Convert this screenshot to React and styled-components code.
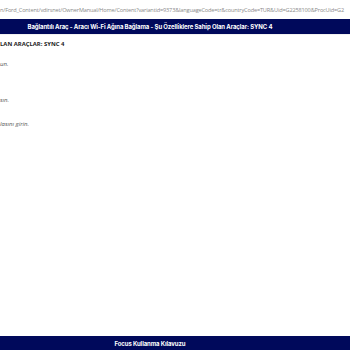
import React from "react";
import styled, { createGlobalStyle } from "styled-components";

const GlobalStyle = createGlobalStyle`
  html, body {
    margin: 0;
    padding: 0;
    background: #ffffff;
    overflow: hidden;
  }
  body {
    font-family: "Open Sans", "Liberation Sans", sans-serif;
  }
`;

const Page = styled.div`
  width: 350px;
  height: 350px;
  display: flex;
  flex-direction: column;
  overflow: hidden;
`;

const UrlLine = styled.div`
  height: 19px;
  display: flex;
  align-items: center;
  font-size: 5.6px;
  color: #8a8a8a;
  white-space: nowrap;
  letter-spacing: -0.16px;
`;

const NavyBar = styled.div`
  height: ${(p) => p.$h}px;
  background: #00095b;
  color: #ffffff;
  display: flex;
  align-items: center;
  justify-content: center;
  padding-right: 50px;
  font-family: Inter, "Liberation Sans", sans-serif;
  font-weight: 700;
  font-size: 6px;
  white-space: nowrap;
  letter-spacing: -0.1px;
`;

const Content = styled.div`
  flex: 1;
  border-top: 1px solid #f1f1f1;
  padding-top: 4px;
  display: flex;
  flex-direction: column;
`;

const Heading = styled.div`
  font-size: 5.9px;
  font-weight: 700;
  color: #222222;
  height: 10px;
  line-height: 10px;
`;

const Para = styled.div`
  font-size: 6px;
  font-style: italic;
  color: #555555;
  margin-top: ${(p) => p.$mt}px;
  height: 10px;
  line-height: 10px;
`;

export default function App() {
  return (
    <Page>
      <GlobalStyle />
      <UrlLine>
        n/Ford_Content/vdirsnet/OwnerManual/Home/Content?variantid=9373&languageCode=tr&countryCode=TUR&Uid=G2258100&ProcUid=G2
      </UrlLine>
      <NavyBar $h={15}>
        Bağlantılı Araç - Aracı Wi-Fi Ağına Bağlama - Şu Özelliklere Sahip Olan Araçlar: SYNC 4
      </NavyBar>
      <Content>
        <Heading>LAN ARAÇLAR: SYNC 4</Heading>
        <Para $mt={10}>un.</Para>
        <Para $mt={26}>sın.</Para>
        <Para $mt={14}>lasını girin.</Para>
      </Content>
      <NavyBar $h={14}>Focus Kullanma Kılavuzu</NavyBar>
    </Page>
  );
}
